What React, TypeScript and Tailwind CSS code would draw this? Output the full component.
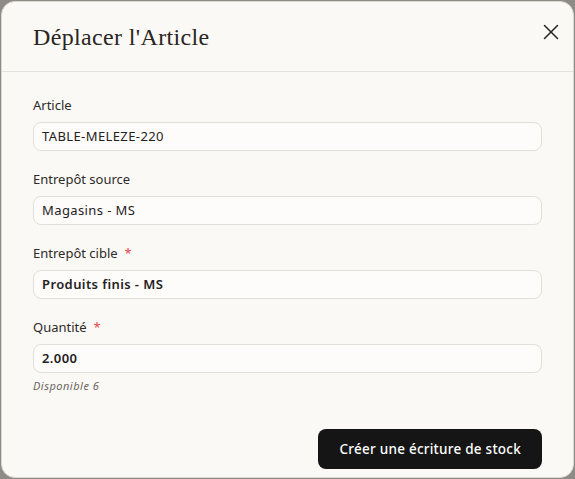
import { X } from 'lucide-react';

const fields = [
  { label: 'Article', value: 'TABLE-MELEZE-220', required: false, weight: 'font-normal' },
  { label: 'Entrepôt source', value: 'Magasins - MS', required: false, weight: 'font-normal' },
  { label: 'Entrepôt cible', value: 'Produits finis - MS', required: true, weight: 'font-semibold' },
  { label: 'Quantité', value: '2.000', required: true, weight: 'font-semibold' },
];

export default function App() {
  return (
    <div className="h-[479px] w-[575px] bg-[#8e8b86] p-px">
      <div
        className="flex h-full w-full flex-col rounded-[14px] border border-[#dcd9d3] bg-[#faf9f6] text-[#2b2825]"
        style={{ fontFamily: '"Noto Sans", "Liberation Sans", sans-serif' }}
      >
        {/* Header */}
        <div className="flex h-[70px] items-center justify-between border-b border-[#e4e1db] pl-[31px] pr-[8px]">
          <h2
            className="text-[24px] font-normal tracking-[0.35px] text-[#2a2622]"
            style={{ fontFamily: '"Liberation Serif", "DejaVu Serif", serif' }}
          >
            Déplacer l'Article
          </h2>
          <button className="-mt-[10px] flex h-7 w-7 items-center justify-center text-[#2b2825]">
            <X className="h-[26px] w-[26px]" strokeWidth={1.4} />
          </button>
        </div>

        {/* Body */}
        <div className="flex flex-col px-[31px] pt-[24px]">
          {fields.map((f, i) => (
            <div key={f.label} className={i < fields.length - 1 ? 'mb-[19px]' : ''}>
              <label className="flex h-[20px] items-center text-[13px] text-[#2e2a27]">
                {f.label}
                {f.required && <span className="ml-[7px] text-[#e0474c]">*</span>}
              </label>
              <div
                className={`mt-[6px] flex h-[29px] items-center rounded-lg border border-[#e2dfd8] bg-[#fdfcfa] px-[8px] text-[13px] tracking-[0.4px] text-[#25211e] ${f.weight}`}
              >
                {f.value}
              </div>
            </div>
          ))}
          <p className="mt-[5px] h-[16px] text-[11px] italic tracking-[0.5px] text-[#6b6661]">Disponible 6</p>

          <div className="mt-[35px] flex justify-end">
            <button className="h-[40px] rounded-lg bg-[#151515] px-[21px] text-[13.5px] font-medium tracking-[0.25px] text-white">
              Créer une écriture de stock
            </button>
          </div>
        </div>
      </div>
    </div>
  );
}
